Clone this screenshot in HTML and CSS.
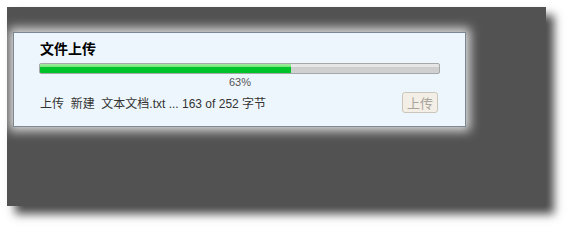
FILE: index.html
```html
<!DOCTYPE html>
<html>

<head>
  <link rel="stylesheet" href="styles.css">
</head>

<body>
  <div class="desktop">
    <div class="upload-box">
      <div class="upload-title">文件上传</div>
      <div class="progress">
        <div class="progress-fill" style="width: 63%"></div>
      </div>
      <div class="progress-label">63%</div>
      <div class="upload-row">
        <span class="upload-status">上传&nbsp; 新建&nbsp; 文本文档.txt ... 163 of 252 字节</span>
        <button class="upload-btn" disabled>上传</button>
      </div>
    </div>
  </div>
</body>

</html>
```

FILE: styles.css
```css
body {
  margin: 0;
  padding-bottom: 24px;
  background: #fff;
  font-family: "Liberation Sans", "Noto Sans CJK SC", sans-serif;
}

.desktop {
  margin: 7px 0 0 7px;
  width: 539px;
  height: 199px;
  padding: 25px 0 0 6px;
  box-sizing: border-box;
  background: #525252;
  box-shadow: 8px 8px 9px rgba(0, 0, 0, 0.7);
}

.upload-box {
  width: 453px;
  height: 95px;
  box-sizing: border-box;
  padding: 7px 25px 0 26px;
  background: #eef6fd;
  border: 1px solid #7b8894;
  box-shadow: 0 0 10px 4px rgba(255, 255, 255, 0.8);
}

.upload-title {
  font-size: 14px;
  line-height: 18px;
  font-weight: bold;
  color: #000;
}

.progress {
  margin: 5px 0 0 -1px;
  height: 11px;
  box-sizing: border-box;
  border: 1px solid #a4a8a8;
  border-radius: 2px;
  background: linear-gradient(#e6e6e6 0, #e6e6e6 30%, #cdcdcd 31%, #d2d2d2 100%);
  overflow: hidden;
}

.progress-fill {
  height: 100%;
  background: linear-gradient(#9ef09e 0, #7fe47f 30%, #00c62a 31%, #00c22a 100%);
}

.progress-label {
  margin-top: 2px;
  text-align: center;
  font-size: 11px;
  line-height: 13px;
  color: #555;
}

.upload-row {
  margin-top: 3px;
  display: flex;
  align-items: center;
  justify-content: space-between;
}

.upload-status {
  font-size: 12px;
  color: #333;
}

.upload-btn {
  width: 36px;
  height: 21px;
  margin-right: 2px;
  padding: 0;
  font-family: "Noto Sans CJK SC", sans-serif;
  font-size: 13px;
  color: #a8a49c;
  background: #f4efe6;
  border: 1px solid #cbc6bb;
  border-radius: 3px;
}
```
